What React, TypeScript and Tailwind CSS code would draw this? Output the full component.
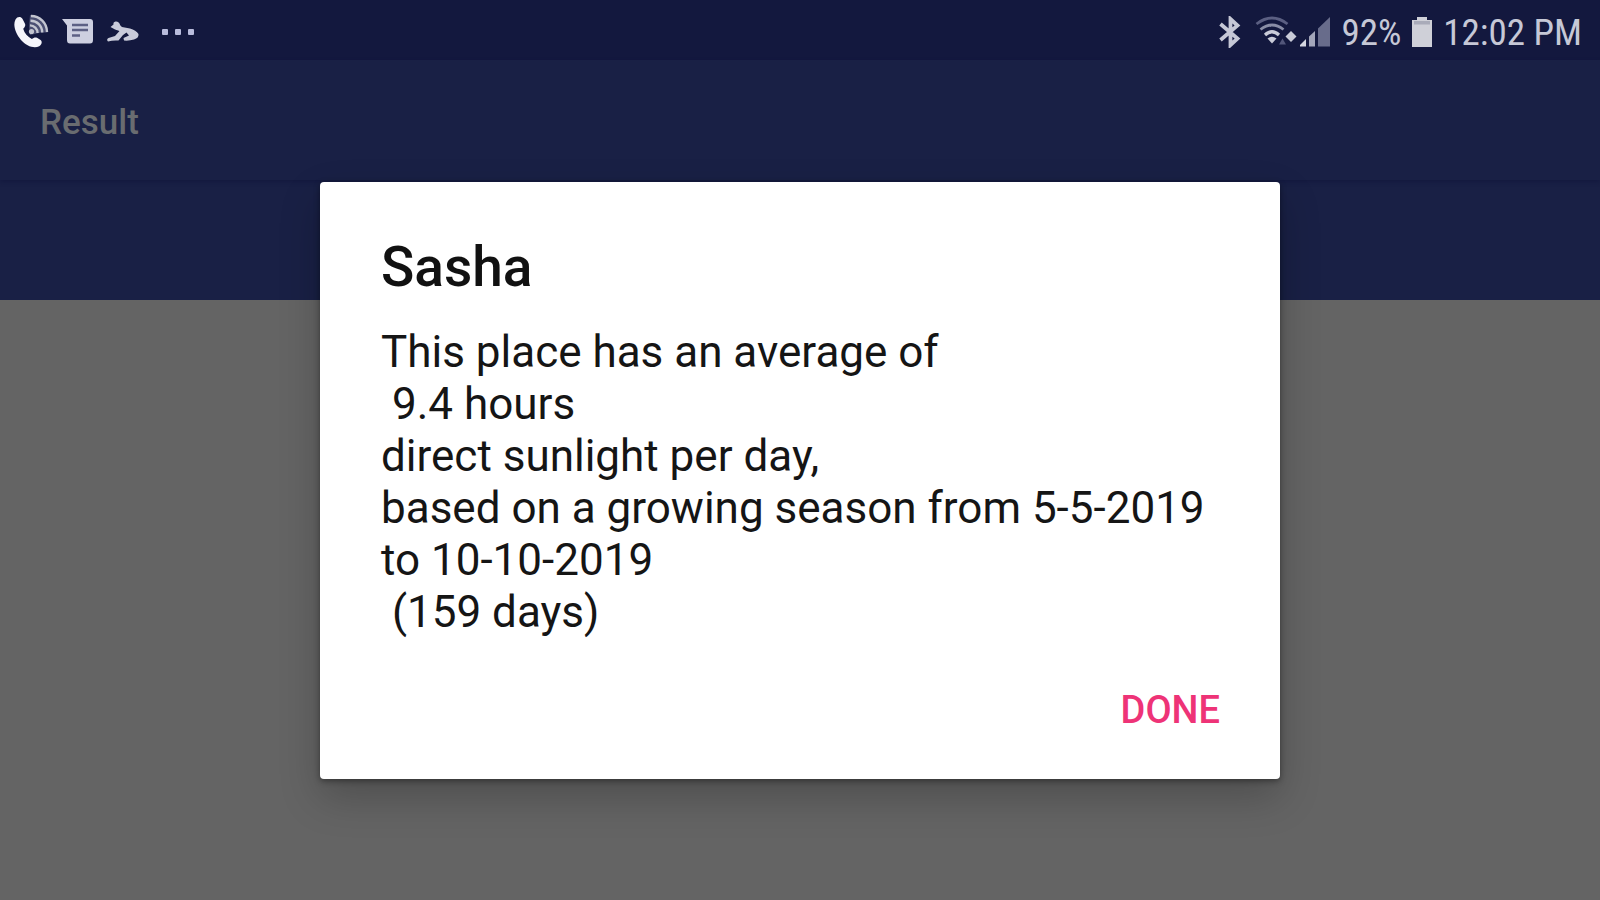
import type { ReactNode } from "react";

function CallIcon() {
  return (
    <svg viewBox="0 0 36 36" className="h-9 w-9" fill="none" aria-hidden="true">
      <path
        d="M1.5 5.5 C3.2 2.4 6.8 2.2 8.4 4.8 L11 9.8 C11.8 11.8 10.6 13.4 9.2 14.8 C10.4 19.2 13.6 22.8 17.8 25 C19.6 23.8 21 23 23 23.8 L26.6 26 C28.8 27.6 27.4 30.8 25.2 32.2 C20.2 35 12.2 32 7 26 C1.4 19.4 -1.4 11 1.5 5.5Z"
        fill="#f5f5fb"
      />
      <path d="M16 1 A17.5 17.5 0 0 1 33.5 18.5 H27 L16 21 L15 12Z" fill="#4b4f72" />
      <g stroke="#c3c5d0" strokeWidth="2.4">
        <path d="M17 2 A16 16 0 0 1 33 18" />
        <path d="M16.5 6.8 A11.5 11.5 0 0 1 28.2 18.5" />
        <path d="M16 11.4 A7.5 7.5 0 0 1 23.5 19" />
      </g>
      <circle cx="17.5" cy="17.5" r="2.6" fill="#c3c5d0" />
    </svg>
  );
}

function MessageIcon() {
  return (
    <svg viewBox="0 0 32 28" className="h-7 w-8" fill="none" aria-hidden="true">
      <path d="M0 1 H28 Q31 1 31 4 V22 Q31 25.5 28 25.5 H8 Q5 25.5 5 22 V7.5Z" fill="#cdcfe0" />
      <path d="M10 7 H26 M10 12 H26 M10 17.5 H18" stroke="#5d6084" strokeWidth="2.6" />
    </svg>
  );
}

function RunnerIcon() {
  return (
    <svg viewBox="0 0 34 24" className="h-6 w-[34px]" aria-hidden="true">
      <path
        d="M4.5 7 L7.5 4.5 Q7 2 9.5 1.5 Q12 1 13.5 3.5 Q14 5.5 16 7 L24 8.5 Q30 10 32.5 14 Q33 18 28 19.5 Q23 21 18 20.5 L17.5 18 L23 15.5 L20.5 12.5 L17 15 L12.5 20.5 Q7 20 2 21.5 Q0 19.5 2.5 18 L9 16 L13.5 11 L9 9.5Z"
        fill="#c9cbda"
      />
    </svg>
  );
}

function MoreIcon() {
  return (
    <svg viewBox="0 0 32 8" className="h-2 w-8" fill="#b9bcdc" aria-hidden="true">
      <rect x="0" y="1" width="6" height="6" rx="1" />
      <rect x="13" y="1" width="6" height="6" rx="1" />
      <rect x="26" y="1" width="6" height="6" rx="1" />
    </svg>
  );
}

function BluetoothIcon() {
  return (
    <svg viewBox="0 0 22 32" className="h-8 w-[22px]" fill="none" stroke="#c6c8d6" strokeWidth="3.8" aria-hidden="true">
      <path d="M1.5 8 L18.5 22.5 L11.5 29 V3 L18.5 9.5 L1.5 24" />
    </svg>
  );
}

function WifiIcon() {
  return (
    <svg viewBox="0 0 42 32" className="h-8 w-[42px]" fill="none" strokeWidth="2.8" aria-hidden="true">
      <path d="M1.5 8 Q17 -4 32.5 8" stroke="#5b5f82" />
      <path d="M5.5 13.5 Q17 4.5 28.5 13.5" stroke="#898da6" />
      <path d="M10 19 Q17 12.5 24 19" stroke="#c9cbd8" strokeWidth="3.2" />
      <path d="M12.5 22.5 Q17 19 21.5 22.5 L17 27.5Z" fill="#c9cbd8" />
      <path d="M24 28.5 L27.5 22.5 L31 28.5Z" fill="#52567a" />
      <path d="M30.5 20.5 L36 15 L41.5 20.5 L36 26Z" fill="#c9cbd8" />
    </svg>
  );
}

function SignalIcon() {
  return (
    <svg viewBox="0 0 32 32" className="h-8 w-8" aria-hidden="true">
      <path d="M1 30.5 V29 L7 23 V30.5Z" fill="#d4d6e0" />
      <path d="M10 30.5 V20.5 L16 15 V30.5Z" fill="#a3a6ba" />
      <path d="M19 30.5 V12.5 L31 1 V30.5Z" fill="#686c8b" />
    </svg>
  );
}

function BatteryIcon() {
  return (
    <svg viewBox="0 0 22 32" className="h-8 w-[22px]" aria-hidden="true">
      <path d="M6 1 H16 V4 H21 V31 H1 V4 H6Z" fill="#cfd0d8" />
      <path d="M3 5 H19 V8.5 H3Z" fill="#a9abb9" />
    </svg>
  );
}

function StatusText({ children }: { children: ReactNode }) {
  return (
    <span className="pt-0.5 font-['Roboto_Condensed',Roboto,sans-serif] text-[37px] leading-10 text-[#c6c8d6]">
      {children}
    </span>
  );
}

function StatusBar() {
  return (
    <div className="flex h-[60px] items-center justify-between bg-[#13183e] pt-1 pr-[18px] pl-[14px]">
      <div className="flex items-center gap-3">
        <CallIcon />
        <MessageIcon />
        <RunnerIcon />
        <span className="ml-2.5">
          <MoreIcon />
        </span>
      </div>
      <div className="flex items-center gap-2.5">
        <BluetoothIcon />
        <span className="ml-1 flex items-center gap-0.5">
          <WifiIcon />
          <SignalIcon />
        </span>
        <StatusText>92%</StatusText>
        <BatteryIcon />
        <StatusText>12:02 PM</StatusText>
      </div>
    </div>
  );
}

export default function App() {
  return (
    <div className="relative flex min-h-screen flex-col bg-[#646464] font-[Roboto,sans-serif]">
      <StatusBar />
      <header className="relative flex h-[120px] items-center bg-[#192045] px-10 pt-1.5 shadow-[0_2px_4px_rgba(12,16,56,0.4)]">
        <h1 className="text-[35px] leading-10 font-medium text-[#696c70]">Result</h1>
      </header>
      <div className="h-[120px] bg-[#192045]" />

      <div className="absolute inset-x-0 top-[60px] bottom-0 flex items-center justify-center">
        <section
          role="dialog"
          aria-labelledby="dialog-title"
          className="flex w-3/5 flex-col rounded-[4px] bg-white pt-[53px] pr-[60px] pb-[45px] pl-[61px] shadow-[0_18px_40px_rgba(0,0,0,0.22),0_2px_6px_rgba(0,0,0,0.4)]"
        >
          <h2 id="dialog-title" className="text-[55px] leading-16 font-medium text-[#111111]">
            Sasha
          </h2>
          <p className="mt-[27px] text-[44px] leading-[52px] whitespace-pre-wrap text-[#151515]">
            {"This place has an average of\n 9.4 hours\ndirect sunlight per day,\nbased on a growing season from 5-5-2019 to 10-10-2019\n (159 days)"}
          </p>
          <button type="button" className="mt-12 self-end text-[38px] leading-12 font-medium text-[#ee3377]">
            DONE
          </button>
        </section>
      </div>
    </div>
  );
}
